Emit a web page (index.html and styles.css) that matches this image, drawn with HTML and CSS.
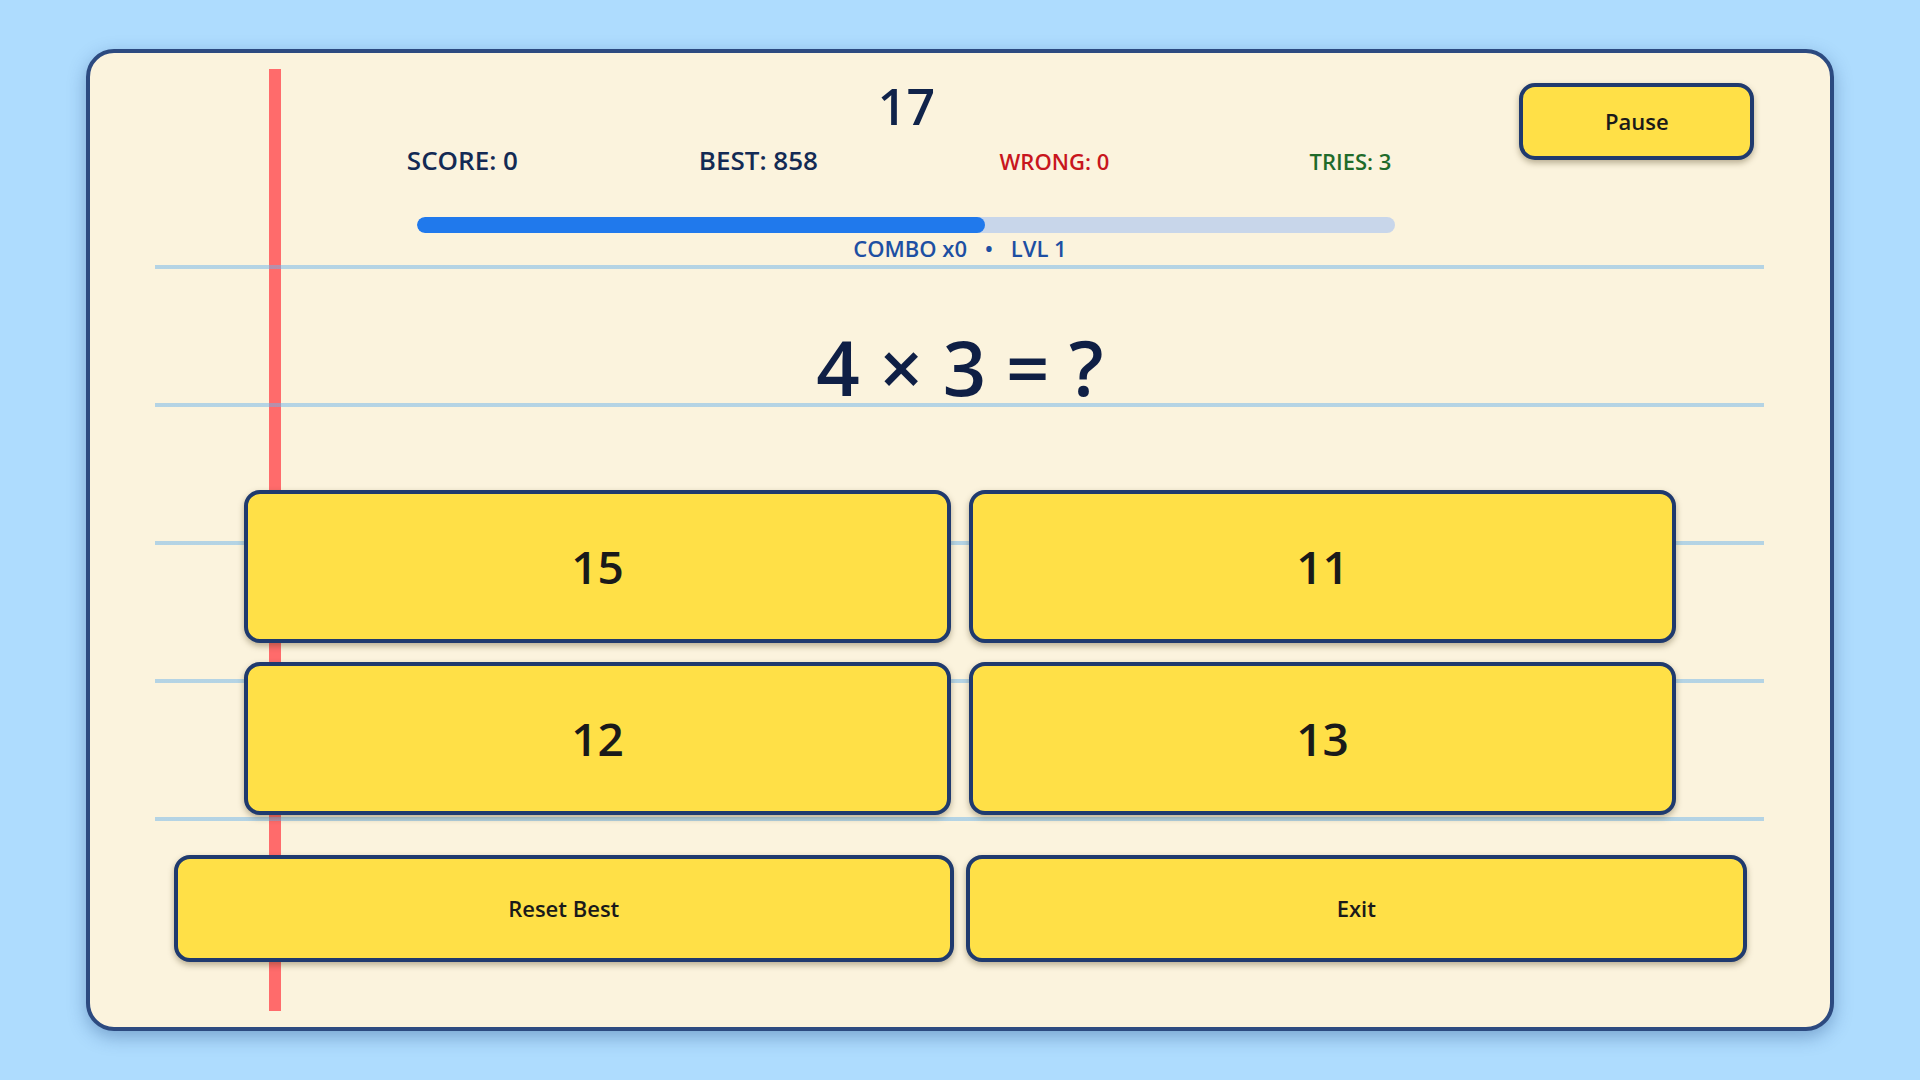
FILE: index.html
```html
<!DOCTYPE html>
<html lang="en">
<head>
    <meta charset="UTF-8">
    <meta name="viewport" content="width=device-width, initial-scale=1.0">
    <title>Times Tables</title>
    <link rel="stylesheet" href="styles.css">
</head>
<body>
    <div class="card">
        <div class="top-bar">
            <div class="hud">
                <div class="timer" id="timer">17</div>
                <div class="stats">
                    <div class="stat">SCORE: <span id="score">0</span></div>
                    <div class="stat">BEST: <span id="best">858</span></div>
                    <div class="stat small wrong">WRONG: <span id="wrong">0</span></div>
                    <div class="stat small tries">TRIES: <span id="tries">3</span></div>
                </div>
                <div class="progress">
                    <div class="progress-fill" id="progressFill" style="width: 58%;"></div>
                </div>
            </div>
            <button class="button pause" id="pauseButton">Pause</button>
        </div>

        <div class="combo">COMBO x0 <span class="dot">&bull;</span> LVL 1</div>

        <div class="question" id="question">4 × 3 = ?</div>

        <div class="answers">
            <button class="button answer">15</button>
            <button class="button answer">11</button>
            <button class="button answer">12</button>
            <button class="button answer">13</button>
        </div>

        <div class="actions">
            <button class="button action">Reset Best</button>
            <button class="button action">Exit</button>
        </div>
    </div>
</body>
</html>
```

FILE: styles.css
```css
* {
    margin: 0;
    padding: 0;
    box-sizing: border-box;
}

body {
    height: 100vh;
    background: #aedcfe;
    display: flex;
    align-items: center;
    justify-content: center;
    font-family: 'Open Sans', 'Noto Sans', sans-serif;
    color: #10234a;
    overflow: hidden;
}

/* Notebook page: ruled lines on top of the red margin */
.card {
    width: 91vw;
    height: 91vh;
    border: 4px solid #2c4a80;
    border-radius: 28px;
    box-shadow: 0 6px 18px rgba(20, 60, 120, 0.35);
    background:
        repeating-linear-gradient(to bottom, transparent 0 134px, rgba(110, 180, 235, 0.5) 134px 138px) 65px 78px / calc(100% - 131px) 690px no-repeat,
        linear-gradient(#ff6b6b, #ff6b6b) 179px 16px / 12px calc(100% - 32px) no-repeat,
        #fbf3dd;
    display: flex;
    flex-direction: column;
    align-items: center;
}

.button {
    font-family: inherit;
    background: #ffe047;
    border: 4px solid #1f3a6e;
    border-radius: 16px;
    color: #1a1a1a;
    font-weight: 600;
    cursor: pointer;
    box-shadow: 0 3px 6px rgba(60, 45, 10, 0.35);
}

.button:hover {
    background: #ffe866;
}

.top-bar {
    width: 100%;
    display: flex;
    align-items: flex-start;
    gap: 21px;
    padding: 28px 75px 0 224px;
}

.hud {
    width: 1184px;
    display: flex;
    flex-direction: column;
    align-items: center;
}

.timer {
    font-size: 50px;
    font-weight: 600;
    line-height: 1;
}

.stats {
    width: 100%;
    display: grid;
    grid-template-columns: repeat(4, 1fr);
    align-items: baseline;
    margin-top: 16px;
}

.stat {
    text-align: center;
    font-size: 26px;
    font-weight: 600;
    line-height: 1;
    color: #132a54;
}

.stat.small {
    font-size: 22px;
}

.stat.wrong {
    color: #c8161d;
}

.stat.tries {
    color: #1f6b2a;
}

.progress {
    width: 978px;
    height: 16px;
    margin-top: 44px;
    background: #c8d6ea;
    border-radius: 8px;
    overflow: hidden;
}

.progress-fill {
    height: 100%;
    background: #2079ec;
    border-radius: 8px;
}

.pause {
    width: 235px;
    height: 77px;
    margin-top: 2px;
    font-size: 22px;
}

.combo {
    margin-top: 4px;
    font-size: 22px;
    font-weight: 600;
    line-height: 1;
    color: #1d4fa3;
}

.combo .dot {
    margin: 0 12px;
}

.question {
    margin-top: 70px;
    font-size: 76px;
    font-weight: 600;
    line-height: 1;
    color: #0f1f45;
}

.answers {
    width: 1432px;
    margin-top: 85px;
    display: grid;
    grid-template-columns: 1fr 1fr;
    gap: 19px 18px;
}

.answer {
    height: 153px;
    font-size: 46px;
}

.actions {
    width: 1573px;
    margin-top: 40px;
    display: grid;
    grid-template-columns: 1fr 1fr;
    gap: 12px;
}

.action {
    height: 107px;
    font-size: 22px;
}
```
